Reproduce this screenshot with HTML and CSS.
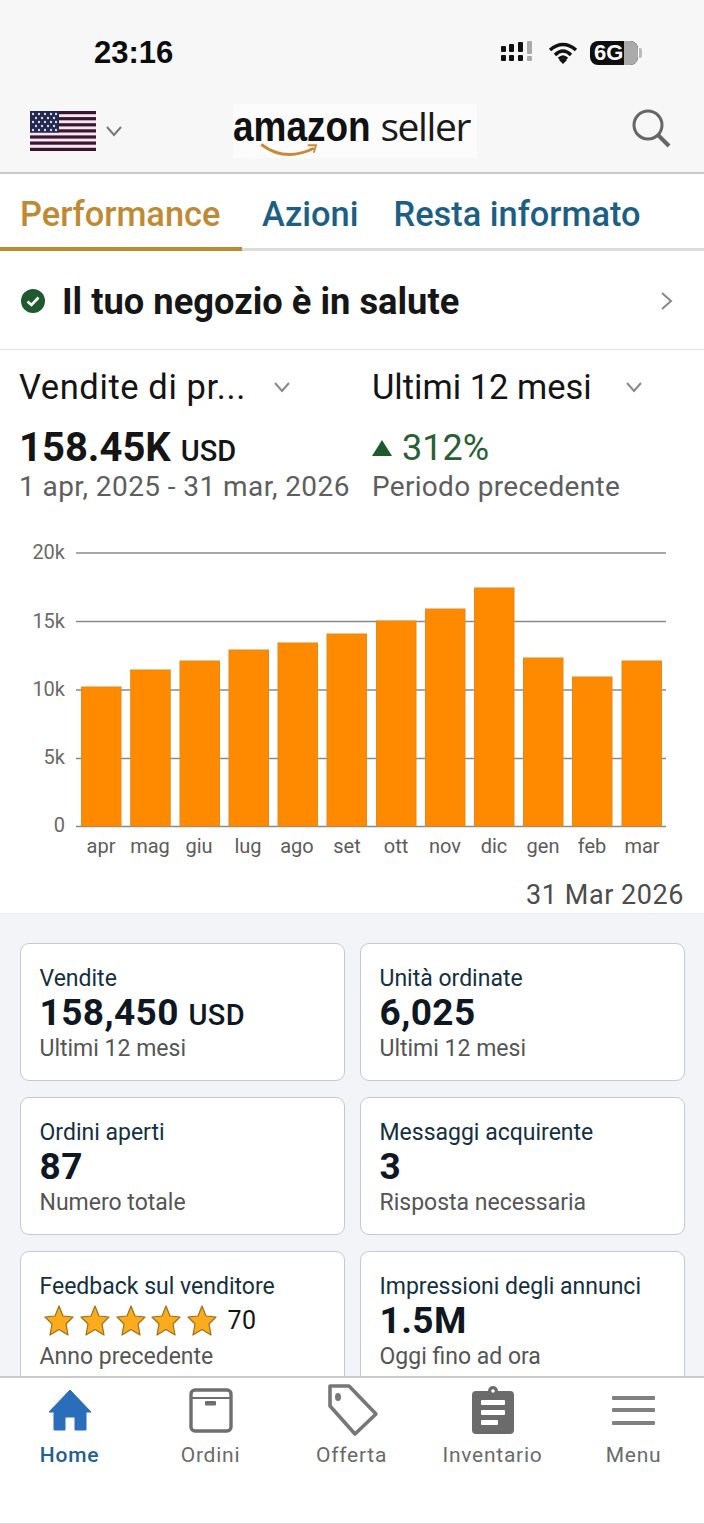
FILE: index.html
```html
<!DOCTYPE html>
<html lang="it">
<head>
<meta charset="utf-8">
<title>Amazon Seller</title>
<link rel="stylesheet" href="styles.css">
</head>
<body>
<div class="app">
  <header class="top">
    <div class="status">
      <span class="time">23:16</span>
      <div class="status-icons">
        <svg width="36" height="24" viewBox="0 0 36 24"><g fill="#111"><rect x="1" y="5" width="5" height="6" rx="1"/><rect x="1" y="14" width="5" height="6" rx="1"/><rect x="9" y="3" width="5" height="8" rx="1"/><rect x="9" y="14" width="5" height="6" rx="1"/><rect x="18" y="1" width="5" height="10" rx="1"/><rect x="18" y="14" width="5" height="6" rx="1"/></g><rect x="27" y="0" width="5" height="13" rx="1" fill="#aaa"/><rect x="27" y="15" width="5" height="5" rx="1" fill="#aaa"/></svg>
        <svg width="30" height="22" viewBox="0 0 30 22"><path d="M2 8 Q15 -3 28 8 M7 13 Q15 5 23 13 M11 17 Q15 13 19 17" fill="none" stroke="#111" stroke-width="3.4"/><path d="M15 22 L11 18 Q15 15 19 18Z" fill="#111"/></svg>
        <div class="battery"><span class="batt-num">6G</span><span class="batt-rest"></span><span class="batt-cap"></span></div>
      </div>
    </div>
    <div class="brand-row">
      <div class="market">
        <svg class="flag" width="66" height="40" viewBox="0 0 66 40"><rect width="66" height="40" fill="#f4e6ee"/><g fill="#3a1430"><rect y="0" width="66" height="3.2"/><rect y="6.1" width="66" height="3.2"/><rect y="12.2" width="66" height="3.2"/><rect y="18.3" width="66" height="3.2"/><rect y="24.4" width="66" height="3.2"/><rect y="30.5" width="66" height="3.2"/><rect y="36.8" width="66" height="3.2"/></g><rect width="29" height="21.5" fill="#23284e"/><g fill="#d8d8e8"><circle cx="3" cy="3" r="1.2"/><circle cx="9" cy="3" r="1.2"/><circle cx="15" cy="3" r="1.2"/><circle cx="21" cy="3" r="1.2"/><circle cx="26" cy="3" r="1.2"/><circle cx="6" cy="7" r="1.2"/><circle cx="12" cy="7" r="1.2"/><circle cx="18" cy="7" r="1.2"/><circle cx="24" cy="7" r="1.2"/><circle cx="3" cy="11" r="1.2"/><circle cx="9" cy="11" r="1.2"/><circle cx="15" cy="11" r="1.2"/><circle cx="21" cy="11" r="1.2"/><circle cx="26" cy="11" r="1.2"/><circle cx="6" cy="15" r="1.2"/><circle cx="12" cy="15" r="1.2"/><circle cx="18" cy="15" r="1.2"/><circle cx="24" cy="15" r="1.2"/><circle cx="3" cy="19" r="1.2"/><circle cx="9" cy="19" r="1.2"/><circle cx="15" cy="19" r="1.2"/><circle cx="21" cy="19" r="1.2"/><circle cx="26" cy="19" r="1.2"/></g></svg>
        <svg width="18" height="12" viewBox="0 0 18 12"><path d="M2 2 L9 10 L16 2" fill="none" stroke="#777" stroke-width="2"/></svg>
      </div>
      <div class="logo">
        <div class="logo-text"><span class="logo-amazon">amazon</span><span class="logo-seller">seller</span></div>
        <svg class="smile" width="78" height="20" viewBox="0 0 78 20"><path d="M2 2 Q34 26 72 7" fill="none" stroke="#c98a35" stroke-width="3.8"/><path d="M64 3 L75 3 L72 13" fill="none" stroke="#c98a35" stroke-width="2.4"/></svg>
      </div>
      <svg class="search" width="42" height="42" viewBox="0 0 42 42"><circle cx="17" cy="17" r="14" fill="none" stroke="#666" stroke-width="3"/><path d="M27 27 L38 38" stroke="#666" stroke-width="4"/></svg>
    </div>
  </header>

  <nav class="tabs">
    <span class="tab tab-active">Performance</span>
    <span class="tab">Azioni</span>
    <span class="tab">Resta informato</span>
  </nav>

  <div class="health">
    <svg width="26" height="26" viewBox="0 0 26 26"><circle cx="13" cy="13" r="12" fill="#1f5a2e"/><path d="M7.5 13.5 L11.5 17 L18.5 9.5" fill="none" stroke="#fff" stroke-width="2.6"/></svg>
    <span class="health-text">Il tuo negozio è in salute</span>
    <svg class="health-chev" width="14" height="20" viewBox="0 0 14 20"><path d="M2 2 L11 10 L2 18" fill="none" stroke="#888" stroke-width="2"/></svg>
  </div>

  <section class="summary">
    <div class="sum-col sum-left">
      <div class="select"><span>Vendite di pr...</span><svg width="18" height="12" viewBox="0 0 18 12"><path d="M2 2 L9 10 L16 2" fill="none" stroke="#888" stroke-width="2"/></svg></div>
      <div class="figure">158.45K <small>USD</small></div>
      <div class="range">1 apr, 2025 - 31 mar, 2026</div>
    </div>
    <div class="sum-col sum-right">
      <div class="select"><span>Ultimi 12 mesi</span><svg width="18" height="12" viewBox="0 0 18 12"><path d="M2 2 L9 10 L16 2" fill="none" stroke="#888" stroke-width="2"/></svg></div>
      <div class="delta"><svg width="20" height="16" viewBox="0 0 20 16"><path d="M10 0 L20 16 L0 16Z" fill="#1f5a2e"/></svg>312%</div>
      <div class="range">Periodo precedente</div>
    </div>
  </section>

  <svg class="chart" width="704" height="350" viewBox="0 530 704 350">
    <g class="grid">
      <line x1="76" x2="666" y1="553" y2="553"/>
      <line x1="76" x2="666" y1="621.5" y2="621.5"/>
      <line x1="76" x2="666" y1="690" y2="690"/>
      <line x1="76" x2="666" y1="758.5" y2="758.5"/>
      <line x1="76" x2="666" y1="826.5" y2="826.5"/>
    </g>
    <g class="ylabels">
      <text x="65" y="559">20k</text>
      <text x="65" y="628">15k</text>
      <text x="65" y="696">10k</text>
      <text x="65" y="764">5k</text>
      <text x="65" y="832">0</text>
    </g>
    <g class="bars">
      <rect x="81.5" y="687" width="39.5" height="139"/>
      <rect x="130.7" y="670" width="39.5" height="156"/>
      <rect x="180" y="661" width="39.5" height="165"/>
      <rect x="229" y="650" width="39.5" height="176"/>
      <rect x="278" y="643" width="39.5" height="183"/>
      <rect x="327" y="634" width="39.5" height="192"/>
      <rect x="376.5" y="621" width="39.5" height="205"/>
      <rect x="425.5" y="609" width="39.5" height="217"/>
      <rect x="474.5" y="588" width="39.5" height="238"/>
      <rect x="523.5" y="658" width="39.5" height="168"/>
      <rect x="572.5" y="677" width="39.5" height="149"/>
      <rect x="622" y="661" width="39.5" height="165"/>
    </g>
    <g class="xlabels">
      <text x="101" y="853">apr</text>
      <text x="150" y="853">mag</text>
      <text x="199" y="853">giu</text>
      <text x="248" y="853">lug</text>
      <text x="297" y="853">ago</text>
      <text x="347" y="853">set</text>
      <text x="396" y="853">ott</text>
      <text x="445" y="853">nov</text>
      <text x="494" y="853">dic</text>
      <text x="543" y="853">gen</text>
      <text x="592" y="853">feb</text>
      <text x="642" y="853">mar</text>
    </g>
  </svg>
  <div class="as-of">31 Mar 2026</div>

  <main class="cards-area">
    <div class="cards">
      <article class="card"><div class="card-title">Vendite</div><div class="card-value">158,450 <small>USD</small></div><div class="card-sub">Ultimi 12 mesi</div></article>
      <article class="card"><div class="card-title">Unità ordinate</div><div class="card-value">6,025</div><div class="card-sub">Ultimi 12 mesi</div></article>
      <article class="card"><div class="card-title">Ordini aperti</div><div class="card-value">87</div><div class="card-sub">Numero totale</div></article>
      <article class="card"><div class="card-title">Messaggi acquirente</div><div class="card-value">3</div><div class="card-sub">Risposta necessaria</div></article>
      <article class="card"><div class="card-title">Feedback sul venditore</div>
        <div class="card-value stars">
          <svg width="176" height="32" viewBox="0 0 176 32"><defs><path id="star" d="M15 1 L19 11 L29 12 L22 19 L24 30 L15 24.5 L6 30 L8 19 L1 12 L11 11Z"/></defs><g class="star-fill"><use href="#star" x="1"/><use href="#star" x="37"/><use href="#star" x="73"/><use href="#star" x="108"/><use href="#star" x="144"/></g></svg>
          <span class="star-count">70</span>
        </div>
        <div class="card-sub">Anno precedente</div></article>
      <article class="card"><div class="card-title">Impressioni degli annunci</div><div class="card-value">1.5M</div><div class="card-sub">Oggi fino ad ora</div></article>
    </div>
  </main>

  <footer class="tabbar">
    <div class="nav-item nav-active">
      <svg width="46" height="46" viewBox="0 0 46 46"><path d="M23 3 L44 25 L39 25 L39 43 L28 43 L28 30 L18 30 L18 43 L7 43 L7 25 L2 25Z" fill="#2a6ebb" stroke="#2a6ebb" stroke-linejoin="round"/></svg>
      <span>Home</span>
    </div>
    <div class="nav-item">
      <svg width="46" height="46" viewBox="0 0 46 46"><rect x="3" y="3" width="40" height="41" rx="4" fill="none" stroke="#6f6f6f" stroke-width="3.4"/><path d="M3 11 H43" stroke="#6f6f6f" stroke-width="2"/><rect x="17" y="14" width="11" height="4.5" rx="1" fill="#6f6f6f"/></svg>
      <span>Ordini</span>
    </div>
    <div class="nav-item">
      <svg width="54" height="54" viewBox="0 0 54 54" class="tag"><path d="M5 3 L24 3 L51 31 L30 51 L5 23Z" fill="none" stroke="#777" stroke-width="3.6" stroke-linejoin="round"/><ellipse cx="13" cy="14" rx="3" ry="4" fill="#777"/></svg>
      <span>Offerta</span>
    </div>
    <div class="nav-item">
      <svg width="46" height="50" viewBox="0 0 46 50" class="clip"><rect x="2" y="6" width="42" height="43" rx="4" fill="#6b6b6b"/><circle cx="23" cy="6" r="5" fill="#6b6b6b"/><circle cx="23" cy="6" r="1.8" fill="#fff"/><rect x="11" y="15" width="24" height="5" rx="1" fill="#fff"/><rect x="11" y="25" width="24" height="5" rx="1" fill="#fff"/><rect x="11" y="35" width="17" height="5" rx="1" fill="#fff"/></svg>
      <span>Inventario</span>
    </div>
    <div class="nav-item">
      <svg width="46" height="46" viewBox="0 0 46 46"><g fill="#808080"><rect x="1" y="9" width="43" height="4" rx="1"/><rect x="1" y="21" width="43" height="4" rx="1"/><rect x="1" y="34" width="43" height="4" rx="1"/></g></svg>
      <span>Menu</span>
    </div>
  </footer>
</div>
</body>
</html>
```

FILE: styles.css
```css
* { box-sizing: border-box; }
html, body { margin: 0; padding: 0; background: #fff; }
body { font-family: Roboto, "Liberation Sans", sans-serif; color: #111; }
.app { width: 704px; height: 1524px; display: flex; flex-direction: column; overflow: hidden; }

.top { height: 174px; background: #f7f7f7; border-bottom: 2px solid #c9c9c9; flex: none; }
.status { height: 100px; display: flex; justify-content: space-between; align-items: flex-start; padding: 36px 66px 0 94px; }
.time { font: 700 31px/34px "Liberation Sans", Arial, sans-serif; color: #0c0c0c; }
.status-icons { display: flex; align-items: center; gap: 12px; padding-top: 5px; }
.battery { position: relative; width: 48px; height: 24px; border-radius: 8px; background: #0e0e0e; display: flex; align-items: center; padding-left: 4px; }
.batt-num { position: relative; z-index: 1; font: 700 22px/24px "Liberation Sans", sans-serif; color: #fff; }
.batt-rest { position: absolute; right: 0; top: 0; width: 14px; height: 24px; background: #aaa; border-radius: 0 8px 8px 0; }
.batt-cap { position: absolute; right: -4px; top: 7px; width: 3px; height: 10px; background: #bbb; border-radius: 0 2px 2px 0; }

.brand-row { height: 72px; display: flex; align-items: flex-start; padding-left: 30px; padding-right: 31px; position: relative; }
.market { display: flex; align-items: center; gap: 9px; padding-top: 11px; width: 203px; }
.logo { display: flex; flex-direction: column; align-items: flex-start; background: #fcfcfc; height: 54px; margin-top: 4px; width: 244px; }
.logo-text { display: flex; align-items: baseline; height: 42px; white-space: nowrap; }
.logo-amazon { display: inline-block; font: 700 42px/44px "Liberation Sans", sans-serif; color: #111; transform: scaleX(.88); transform-origin: left; margin-right: -9px; }
.logo-seller { font: 400 39px/44px "Open Sans", sans-serif; letter-spacing: -1.4px; color: #1a1a1a; }
.smile { margin-top: -3px; margin-left: 17px; }
.search { margin-left: auto; margin-top: 8px; }

.tabs { height: 77px; flex: none; display: flex; border-bottom: 3px solid #dcdcdc; background: #fff; }
.tab { font-size: 34.4px; font-weight: 500; line-height: 80px; color: #1d5f84; height: 77px; white-space: nowrap; }
.tab-active { color: #c08a34; border-bottom: 4px solid #c08a34; width: 242px; padding-left: 20px; margin-right: 20px; }
.tab:nth-child(2) { margin-right: 35px; }

.health { height: 99px; flex: none; display: flex; align-items: center; padding: 2px 30px 0 20px; border-bottom: 1px solid #e3e3e3; }
.health-text { font-weight: 700; font-size: 36.3px; margin-left: 16px; color: #161616; flex: 1; white-space: nowrap; }

.summary { display: flex; flex: none; height: 180px; }
.sum-col { display: flex; flex-direction: column; }
.sum-left { width: 372px; padding-left: 19px; }
.sum-right { flex: 1; }
.select { display: flex; align-items: center; justify-content: space-between; font-size: 34.5px; line-height: 40px; margin-top: 17px; color: #141414; }
.sum-left .select { width: 272px; letter-spacing: .6px; }
.sum-right .select { width: 271px; }
.figure { font-weight: 700; font-size: 40px; line-height: 44px; height: 44px; margin-top: 19px; color: #151515; }
.figure small { font-size: 29px; font-weight: 500; line-height: 1; }
.delta { font-size: 36px; line-height: 44px; margin-top: 19px; color: #2a5f36; display: flex; align-items: center; gap: 10px; }
.range { font-size: 28px; line-height: 34px; color: #5e5e5e; white-space: nowrap; letter-spacing: .3px; }
.sum-left .range { letter-spacing: .42px; }

.chart { display: block; flex: none; height: 350px; }
.grid line { stroke: #8a8a8a; stroke-width: 1.5; }
.bars rect { fill: #ff8a00; stroke: #e08a1c; stroke-width: 1; }
.ylabels text { font-size: 20px; fill: #6a6a6a; text-anchor: end; }
.xlabels text { font-size: 20px; fill: #5c5c5c; text-anchor: middle; }

.as-of { flex: none; height: 35px; margin-top: -2px; text-align: right; padding-right: 20px; font-size: 27px; line-height: 34px; color: #4c4c4c; letter-spacing: .55px; }

.cards-area { flex: 1; min-height: 0; overflow: hidden; background: #f3f4f8; padding: 29px 19px 0 19.5px; border-top: 1px solid #ececec; }
.cards { display: grid; grid-template-columns: 325px 325px; column-gap: 15px; row-gap: 16px; grid-auto-rows: 138px; }
.card { background: #fff; border: 1.5px solid #c6c9cf; border-radius: 9px; padding: 21px 19px 0; }
.card-title { font-size: 23px; line-height: 28px; color: #14303f; white-space: nowrap; }
.card-value { font-weight: 700; font-size: 37px; line-height: 40px; height: 40px; color: #0f1822; letter-spacing: .4px; }
.card-value small { font-size: 29px; font-weight: 500; line-height: 1; }
.card-sub { font-size: 23px; line-height: 30px; margin-top: 1px; color: #555; }
.stars { display: flex; align-items: center; gap: 9px; padding-left: 3px; }
.star-fill { fill: #fbab1c; stroke: #9a6f1a; stroke-width: 1.2; stroke-linejoin: round; }
.star-count { font-weight: 400; font-size: 25px; color: #141414; }

.tabbar { height: 148px; flex: none; background: #fff; border-top: 2px solid #c9c9c9; border-bottom: 1px solid #d8d8d8; display: grid; grid-template-columns: repeat(5, 141px); margin-left: -1px; }
.nav-item { display: grid; grid-template-rows: 64px 26px; align-content: start; justify-items: center; align-items: center; font-size: 21px; line-height: 26px; color: #6a6a6a; font-weight: 400; letter-spacing: .75px; }
.nav-active { color: #21608f; font-weight: 500; }
```
